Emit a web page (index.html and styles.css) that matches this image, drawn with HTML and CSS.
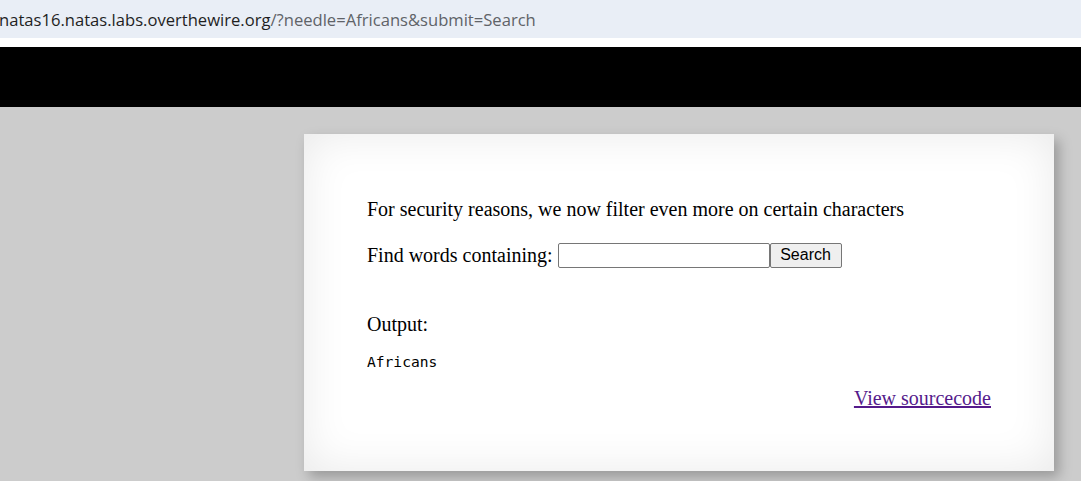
FILE: index.html
```html
<!DOCTYPE html>
<html>
<head>
<meta charset="utf-8">
<link rel="stylesheet" href="styles.css">
</head>
<body>
<div class="urlbar"><span class="host">natas16.natas.labs.overthewire.org</span><span class="path">/?needle=Africans&amp;submit=Search</span></div>
<div class="gap"></div>
<div class="banner"></div>
<main class="stage">
  <div class="card">
    <p class="intro">For security reasons, we now filter even more on certain characters</p>
    <form class="find">
      <label>Find words containing:</label>
      <input class="needle" type="text">
      <button class="submit" type="button">Search</button>
    </form>
    <p class="outlabel">Output:</p>
    <pre class="output">Africans</pre>
    <div class="source"><a href="#">View sourcecode</a></div>
  </div>
</main>
</body>
</html>
```
FILE: styles.css
```css
html, body { margin: 0; padding: 0; }
body {
  background: #cccccc;
  font-family: "Liberation Serif", "Times New Roman", serif;
  font-size: 20px;
  color: #000;
  overflow: hidden;
  height: 481px;
}
.urlbar {
  height: 38px;
  background: #e9eef6;
  display: flex;
  align-items: center;
  font-family: "Open Sans", "Noto Sans", sans-serif;
  font-size: 16.6px;
  white-space: nowrap;
  margin-left: -1px;
}
.urlbar .host { color: #1f1f1f; }
.urlbar .path { color: #5f6368; }
.gap { height: 9px; background: #ffffff; }
.banner { height: 60px; background: #000; }
.stage { padding-top: 27px; }
.card {
  margin-left: 304px;
  width: 750px;
  height: 337px;
  box-sizing: border-box;
  background: #fff;
  padding: 64px 63px 0 63px;
  box-shadow: 0 0 45px rgba(0,0,0,0.09) inset, 5px 6px 12px rgba(0,0,0,0.25);
}
.intro { margin: 0; line-height: 23px; }
.find {
  margin: 21px 0 0 0;
  display: flex;
  align-items: center;
  height: 26px;
}
.find label { margin-right: 5px; }
.needle {
  width: 212px;
  height: 25px;
  box-sizing: border-box;
  border: 1px solid #767676;
  border-radius: 2px;
  margin: 0;
  padding: 1px 2px;
}
.submit {
  height: 25px;
  box-sizing: border-box;
  border: 1px solid #767676;
  border-radius: 2px;
  background: #efefef;
  font-family: "Liberation Sans", Arial, sans-serif;
  font-size: 16px;
  width: 72px;
  padding: 0;
  margin: 0;
}
.outlabel { margin: 45px 0 0 0; line-height: 23px; }
.output {
  margin: 17px 0 0 0;
  font-family: "DejaVu Sans Mono", "Liberation Mono", monospace;
  font-size: 14.6px;
  line-height: 17px;
}
.source { margin-top: 17px; text-align: right; line-height: 23px; }
.source a { color: #551a8b; }
```
